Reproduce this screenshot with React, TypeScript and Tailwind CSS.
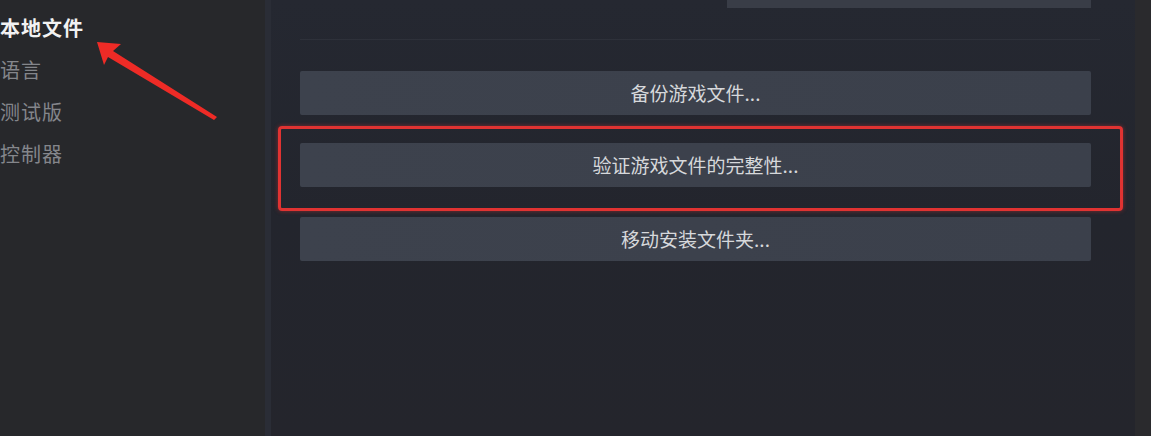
import React from "react";

const font = { fontFamily: '"Noto Sans CJK SC", "Noto Sans", sans-serif' };

function Btn({ label }: { label: string }) {
  return (
    <div className="h-[44px] w-[791px] rounded-[2px] bg-gradient-to-r from-[#3d424d] to-[#3b404b] flex items-center justify-center text-[19px] text-[#d6d8db]">
      {label}
    </div>
  );
}

export default function App() {
  return (
    <div className="relative w-[1151px] h-[436px] overflow-hidden flex bg-[#27282c]" style={font}>
      <div className="w-[265px] shrink-0 bg-[#27282b] flex flex-col pt-[17px]">
        <div className="h-[21px] leading-[21px] text-[20px] font-bold text-[#f2f2f2] tracking-[1px]">本地文件</div>
        <div className="mt-[21px] h-[21px] leading-[21px] text-[20px] text-[#84868b] tracking-[1px]">语言</div>
        <div className="mt-[21px] h-[21px] leading-[21px] text-[20px] text-[#84868b] tracking-[1px]">测试版</div>
        <div className="mt-[21px] h-[21px] leading-[21px] text-[20px] text-[#84868b] tracking-[1px]">控制器</div>
      </div>
      <div className="w-[870px] shrink-0 bg-gradient-to-b from-[#252831] via-[#23252d] to-[#24252c] border-l-[6px] border-[#2a2d36] flex flex-col pl-[29px]">
        <div className="h-[8px] w-[791px] flex justify-end">
          <div className="w-[364px] h-[8px] bg-[#393d47]" />
        </div>
        <div className="mt-[31px] h-px w-[800px] bg-[#2e313a]" />
        <div className="mt-[31px] flex flex-col">
          <Btn label="备份游戏文件..." />
          <div className="h-[28px]" />
          <Btn label="验证游戏文件的完整性..." />
          <div className="h-[30px]" />
          <Btn label="移动安装文件夹..." />
        </div>
      </div>
      <div className="flex-1 bg-[#2a2a2d]" />
      <div className="absolute left-[278px] top-[126px] w-[845px] h-[85px] border-[3px] border-[#e03332] rounded-[4px] shadow-[0_0_4px_rgba(224,51,50,0.5)]" />
      <svg className="absolute left-0 top-0" width="260" height="140" viewBox="0 0 260 140">
        <polygon points="97,42 121,44 113,51 217,117 214,120 108,57 104,65" fill="#ee2b26" />
      </svg>
    </div>
  );
}
